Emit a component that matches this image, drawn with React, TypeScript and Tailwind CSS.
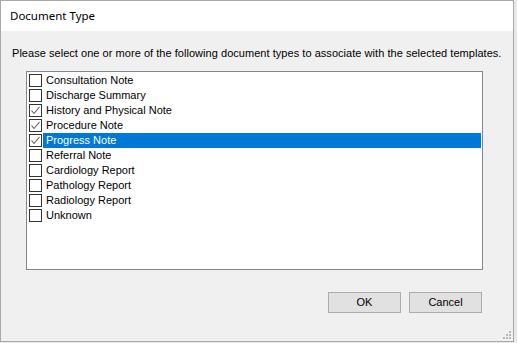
const items = [
  { label: "Consultation Note", checked: false },
  { label: "Discharge Summary", checked: false },
  { label: "History and Physical Note", checked: true },
  { label: "Procedure Note", checked: true },
  { label: "Progress Note", checked: true, selected: true },
  { label: "Referral Note", checked: false },
  { label: "Cardiology Report", checked: false },
  { label: "Pathology Report", checked: false },
  { label: "Radiology Report", checked: false },
  { label: "Unknown", checked: false },
];

function CheckBox({ checked }: { checked: boolean }) {
  return (
    <span className="flex h-[13px] w-[13px] shrink-0 items-center justify-center border border-[#333333] bg-white">
      {checked && (
        <svg width="11" height="11" viewBox="0 0 11 11" fill="none">
          <path d="M1.5 5.5 L4 8.5 L9.5 2" stroke="#5a5a5a" strokeWidth="1.1" />
        </svg>
      )}
    </span>
  );
}

export default function App() {
  return (
    <div className="h-[343px] w-[517px] overflow-hidden bg-[#e8e8e8] font-['Liberation_Sans',Arial,sans-serif] text-[11px] text-black">
      <div className="flex h-[342px] w-[514px] flex-col border border-[#a9a9a9] bg-[#f0f0f0]">
        {/* title bar */}
        <div className="flex h-[30px] shrink-0 items-center bg-white pl-[9px] font-['Noto_Sans','Open_Sans',sans-serif] text-[11.5px] text-black">
          Document Type
        </div>

        <div className="relative flex flex-1 flex-col">
          <p className="mt-[16px] h-[13px] pl-[11px] leading-[13px] tracking-[0.04px]">
            Please select one or more of the following document types to associate with the selected templates.
          </p>

          <div className="ml-[25px] mt-[11px] h-[199px] w-[457px] border border-[#828790] bg-white pt-[1px]">
            {items.map((it) => (
              <div key={it.label} className="flex h-[15px] items-center pl-[2px] pr-[1px]">
                <CheckBox checked={it.checked} />
                <span
                  className={
                    "ml-[1px] flex h-[15px] flex-1 items-center pl-[3px] leading-[15px] " +
                    (it.selected ? "bg-[#0078d7] text-white" : "")
                  }
                >
                  {it.label}
                </span>
              </div>
            ))}
          </div>

          <div className="ml-[327px] mt-[22px] flex gap-[8px]">
            <button className="flex h-[21px] w-[73px] items-center justify-center border border-[#adadad] bg-[#e1e1e1] text-[11px]">
              OK
            </button>
            <button className="flex h-[21px] w-[73px] items-center justify-center border border-[#adadad] bg-[#e1e1e1] text-[11px]">
              Cancel
            </button>
          </div>

          {/* resize grip */}
          <svg className="absolute bottom-[1px] right-[1px]" width="10" height="10" viewBox="0 0 10 10">
            <rect x="7" y="1" width="2" height="2" fill="#b8b8b8" />
            <rect x="4" y="4" width="2" height="2" fill="#b8b8b8" />
            <rect x="7" y="4" width="2" height="2" fill="#b8b8b8" />
            <rect x="1" y="7" width="2" height="2" fill="#b8b8b8" />
            <rect x="4" y="7" width="2" height="2" fill="#b8b8b8" />
            <rect x="7" y="7" width="2" height="2" fill="#b8b8b8" />
          </svg>
        </div>
      </div>
    </div>
  );
}
